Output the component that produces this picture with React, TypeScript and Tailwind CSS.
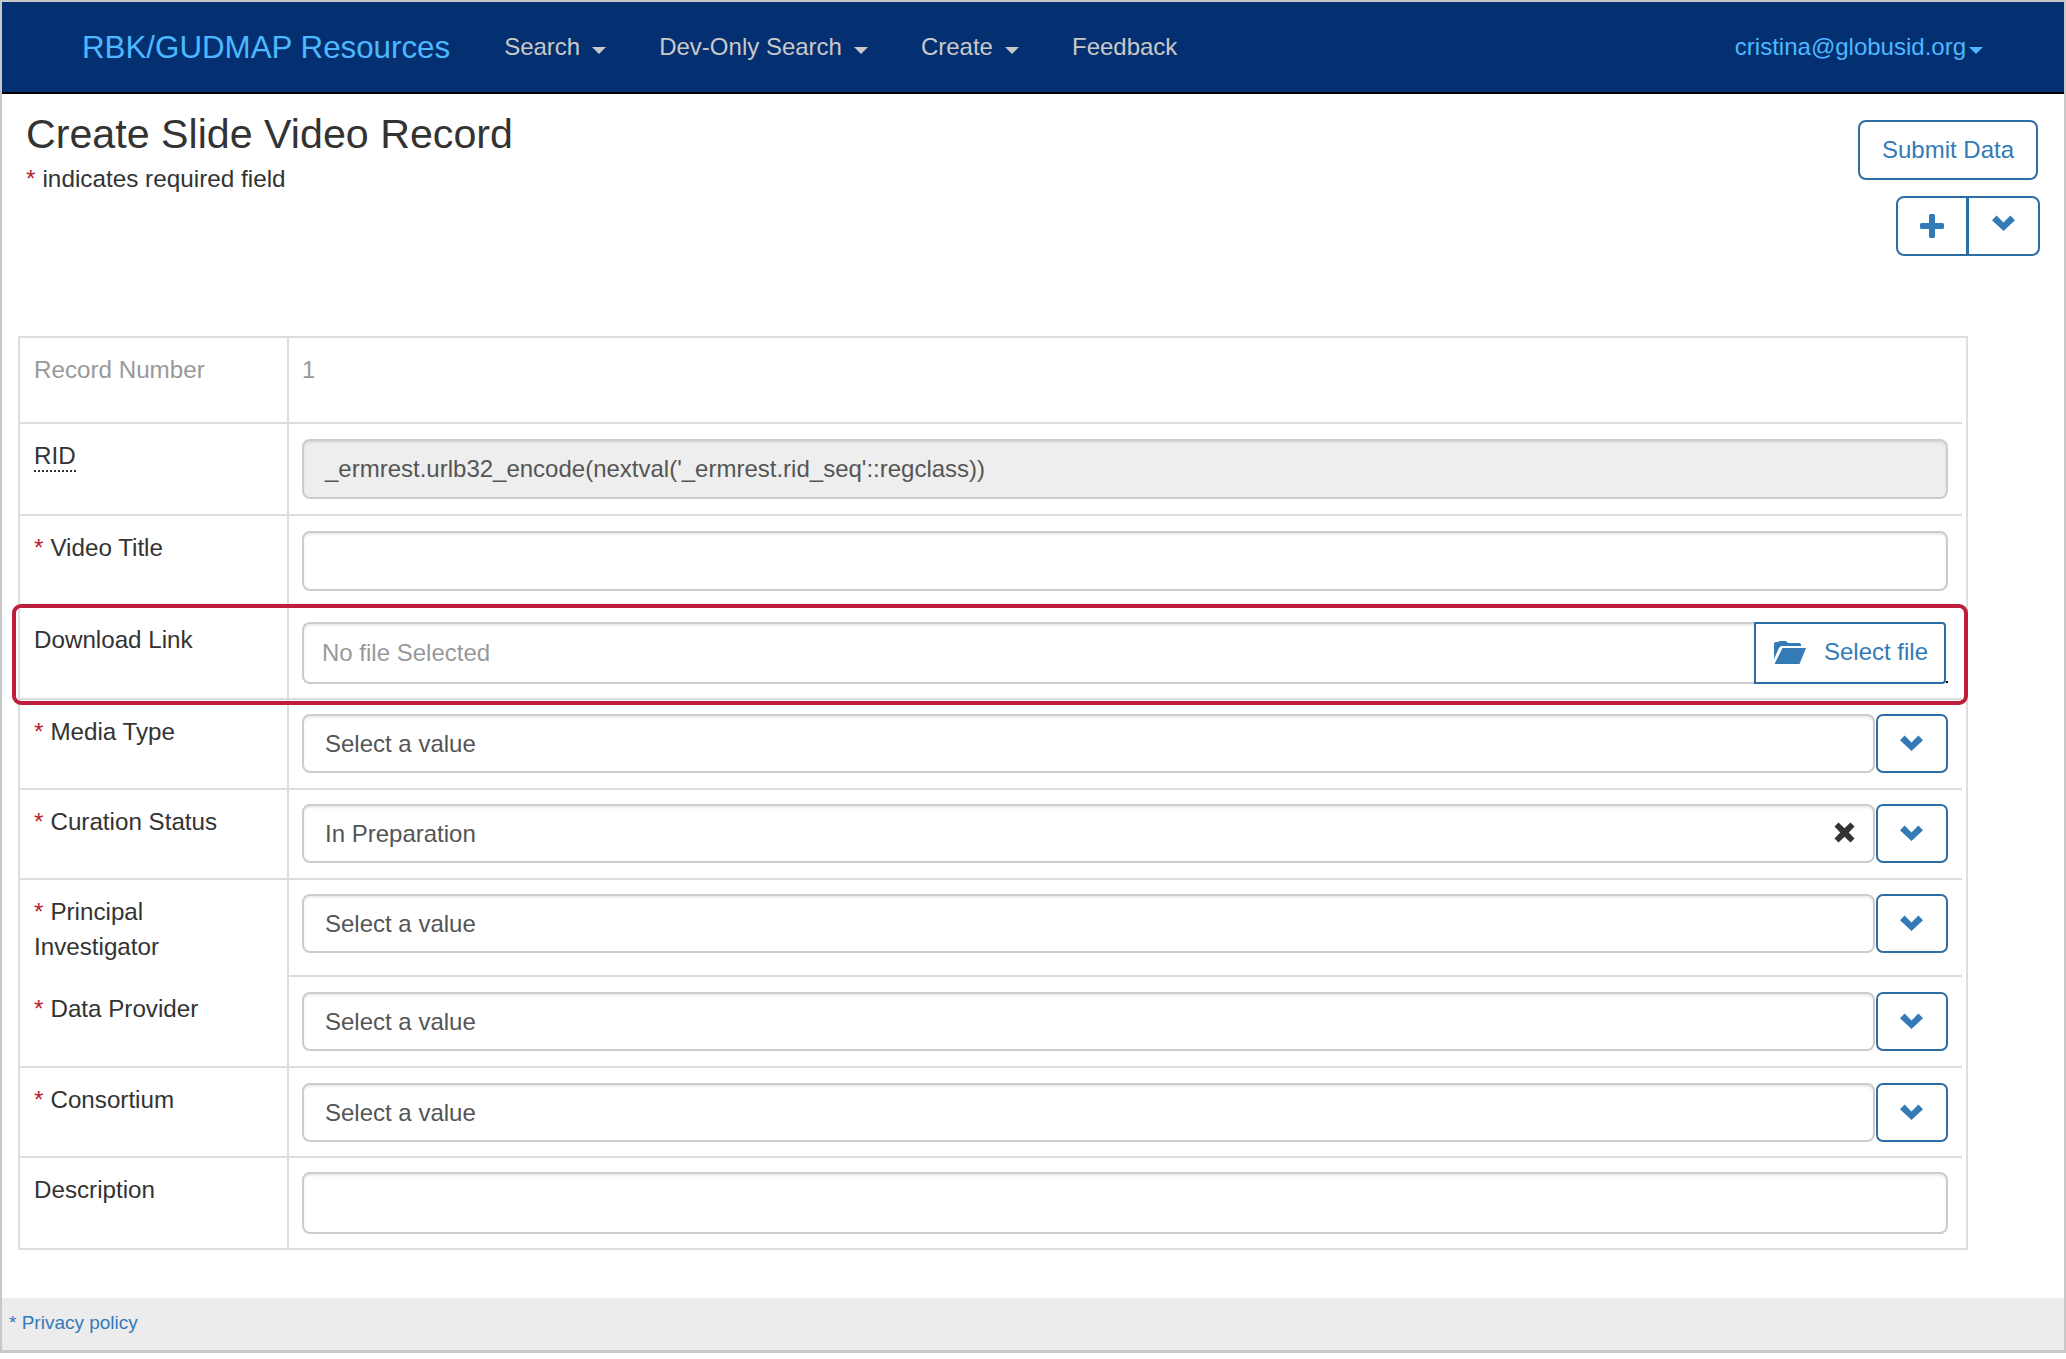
import type { ReactNode } from 'react';

function Caret({ className }: { className: string }) {
  return <span className={`inline-block w-0 h-0 border-x-[7px] border-x-transparent border-t-[7px] ${className}`} />;
}

function Chevron() {
  return (
    <svg width="23" height="16" viewBox="0 0 23 16" className="fill-[#337ab7]">
      <path d="M0 5.2 L4.6 0.6 L11.5 7.5 L18.4 0.6 L23 5.2 L11.5 16 Z" />
    </svg>
  );
}

function Plus() {
  return (
    <svg width="24" height="24" viewBox="0 0 24 24" className="fill-[#337ab7]">
      <path d="M9 1.5 Q9 0 10.5 0 H13.5 Q15 0 15 1.5 V9 H22.5 Q24 9 24 10.5 V13.5 Q24 15 22.5 15 H15 V22.5 Q15 24 13.5 24 H10.5 Q9 24 9 22.5 V15 H1.5 Q0 15 0 13.5 V10.5 Q0 9 1.5 9 H9 Z" />
    </svg>
  );
}

function Cross() {
  return (
    <svg width="21" height="21" viewBox="0 0 21 21" className="fill-[#333] mb-[2px]">
      <path d="M4.5 0.5 L10.5 6.2 L16.5 0.5 L20.5 4.5 L14.8 10.5 L20.5 16.5 L16.5 20.5 L10.5 14.8 L4.5 20.5 L0.5 16.5 L6.2 10.5 L0.5 4.5 Z" />
    </svg>
  );
}

function FolderOpen() {
  return (
    <svg width="32" height="23" viewBox="0 0 32 23" className="fill-[#337ab7]">
      <path d="M0 3 Q0 1 2 1 H4 Q5 0 6 0 H11 Q12 0 13 1 L14 2 H25 Q27 2 27 4 V5 H8 Q6 5 5 7 L0 18 Z" />
      <path d="M8.5 7 H32 L25.5 23 H0.5 Z" />
    </svg>
  );
}

function NavMenu({ label }: { label: string }) {
  return (
    <a className="flex items-center gap-[12px] text-[24px] text-[#c9c9c9]">
      {label}
      <Caret className="border-t-[#c9c9c9] mt-[6px]" />
    </a>
  );
}

function Navbar() {
  return (
    <nav className="flex h-[92px] shrink-0 items-center gap-[53px] border-b-[2px] border-black bg-[#043071] pl-[80px] pr-[81px]">
      <a className="mr-[1px] text-[31.3px] text-[#4db8ff] mt-[2px]">RBK/GUDMAP Resources</a>
      <NavMenu label="Search" />
      <NavMenu label="Dev-Only Search" />
      <NavMenu label="Create" />
      <a className="text-[24px] text-[#c9c9c9]">Feedback</a>
      <a className="ml-auto flex items-center gap-[3px] text-[24px] text-[#4db8ff]">
        cristina@globusid.org
        <Caret className="border-t-[#4db8ff] mt-[6px]" />
      </a>
    </nav>
  );
}

function Req() {
  return <span className="text-[#b5222f] mr-[7px]">*</span>;
}

function Row({ label, required, muted, rid, noLine, last, children, className = '' }: {
  label: string;
  required?: boolean;
  muted?: boolean;
  rid?: boolean;
  noLine?: boolean;
  last?: boolean;
  children: ReactNode;
  className?: string;
}) {
  return (
    <div className={`flex ${className}`}>
      <div className={`w-[269px] shrink-0 border-r-[2px] border-[#ddd] pl-[14px] pr-[15px] pt-[14px] text-[24.2px] leading-[35px] ${noLine || last ? '' : 'border-b-[2px]'} ${muted ? 'text-[#999]' : 'text-[#333]'}`}>
        {required && <Req />}
        {rid ? <span className="inline-block leading-[28px] border-b-[2px] border-dotted border-[#333]">{label}</span> : label}
      </div>
      <div className={`mr-[4px] flex-1 border-[#ddd] pl-[13px] pr-[14px] ${last ? '' : 'border-b-[2px]'}`}>
        {children}
      </div>
    </div>
  );
}

const boxClass = 'border-[2px] border-[#ccc] shadow-[inset_0_2px_2px_rgba(0,0,0,0.075)] text-[24px] text-[#555]';

function SelectField({ value, clearable, pad = 'py-[14px]' }: { value: string; clearable?: boolean; pad?: string }) {
  return (
    <div className={`flex ${pad}`}>
      <div className={`flex h-[59px] flex-1 items-center justify-between rounded-[8px] pl-[21px] pr-[18px] ${boxClass}`}>
        <span>{value}</span>
        {clearable && <Cross />}
      </div>
      <button className="ml-[1px] flex h-[59px] w-[72px] items-center justify-center rounded-[7px] border-[2px] border-[#2e6da4] pb-[2px] pr-[2px]">
        <Chevron />
      </button>
    </div>
  );
}

export default function App() {
  return (
    <div className="h-[1359px] bg-white pb-[6px] font-['Liberation_Sans',Arial,sans-serif]">
      <div className="flex h-full flex-col border-x-[2px] border-t-[2px] border-b-[3px] border-[#c8c8c8]">
        <Navbar />

        <main className="flex-1">
          <div className="flex h-[242px] justify-between pl-[24px] pr-[24px]">
            <div>
              <h1 className="mt-[12px] text-[41.2px] leading-[56px] text-[#333]">Create Slide Video Record</h1>
              <p className="text-[24.3px] leading-[34px] text-[#333]"><Req />indicates required field</p>
            </div>
            <div className="flex flex-col items-end pt-[26px]">
              <button className="mr-[2px] h-[60px] w-[180px] rounded-[8px] border-[2px] border-[#2e6da4] text-[24px] text-[#337ab7]">Submit Data</button>
              <div className="mt-[16px] flex">
                <button className="flex h-[60px] w-[72px] items-center justify-center rounded-l-[8px] border-[2px] border-[#2e6da4]"><Plus /></button>
                <button className="ml-[-1px] flex h-[60px] w-[73px] items-center justify-center rounded-r-[8px] border-[2px] border-[#2e6da4] pb-[6px]"><Chevron /></button>
              </div>
            </div>
          </div>

          <div className="relative ml-[16px] w-[1950px] border-[2px] border-[#ddd]">
            <Row label="Record Number" muted className="h-[86px]">
              <div className="pt-[14px] text-[24px] leading-[35px] text-[#999]">1</div>
            </Row>
            <Row label="RID" rid>
              <div className="py-[15px]">
                <div className={`flex h-[60px] items-center rounded-[8px] bg-[#eee] pl-[21px] ${boxClass}`}>
                  _ermrest.urlb32_encode(nextval('_ermrest.rid_seq'::regclass))
                </div>
              </div>
            </Row>
            <Row label="Video Title" required>
              <div className="py-[15px]">
                <input className={`block h-[60px] w-full rounded-[8px] ${boxClass}`} />
              </div>
            </Row>
            <Row label="Download Link">
              <div className="flex py-[14px]">
                <div className="flex h-[62px] flex-1 items-center rounded-l-[8px] border-y-[2px] border-l-[2px] border-[#ccc] pl-[18px] text-[24px] text-[#999] shadow-[inset_0_2px_2px_rgba(0,0,0,0.075)]">
                  No file Selected
                </div>
                <button className="relative mr-[2px] flex h-[62px] w-[192px] items-center rounded-r-[4px] border-[2px] border-[#2e6da4] pb-[2px] pl-[18px] text-[24px] text-[#337ab7]">
                  <FolderOpen />
                  <span className="ml-[18px]">Select file</span>
                  <span className="absolute bottom-[-1px] right-[-4px] h-[2px] w-[2px] bg-black" />
                </button>
              </div>
            </Row>
            <Row label="Media Type" required>
              <SelectField value="Select a value" pad="pt-[14px] pb-[15px]" />
            </Row>
            <Row label="Curation Status" required>
              <SelectField value="In Preparation" clearable pad="pt-[14px] pb-[15px]" />
            </Row>
            <Row label="Principal Investigator" required noLine>
              <SelectField value="Select a value" pad="pt-[14px] pb-[22px]" />
            </Row>
            <Row label="Data Provider" required>
              <SelectField value="Select a value" pad="pt-[15px] pb-[15px]" />
            </Row>
            <Row label="Consortium" required>
              <SelectField value="Select a value" pad="pt-[15px] pb-[14px]" />
            </Row>
            <Row label="Description" last>
              <div className="py-[14px]">
                <input className={`block h-[62px] w-full rounded-[8px] ${boxClass}`} />
              </div>
            </Row>

            {/* red annotation around the Download Link row */}
            <div className="pointer-events-none absolute left-[-8px] top-[266px] h-[101px] w-[1956px] rounded-[9px] border-[4px] border-[#be1e3c]" />
          </div>
        </main>

        <footer className="h-[52px] shrink-0 bg-[#ececec] pl-[7px] text-[19px] leading-[50px] text-[#337ab7]">
          * Privacy policy
        </footer>
      </div>
    </div>
  );
}
